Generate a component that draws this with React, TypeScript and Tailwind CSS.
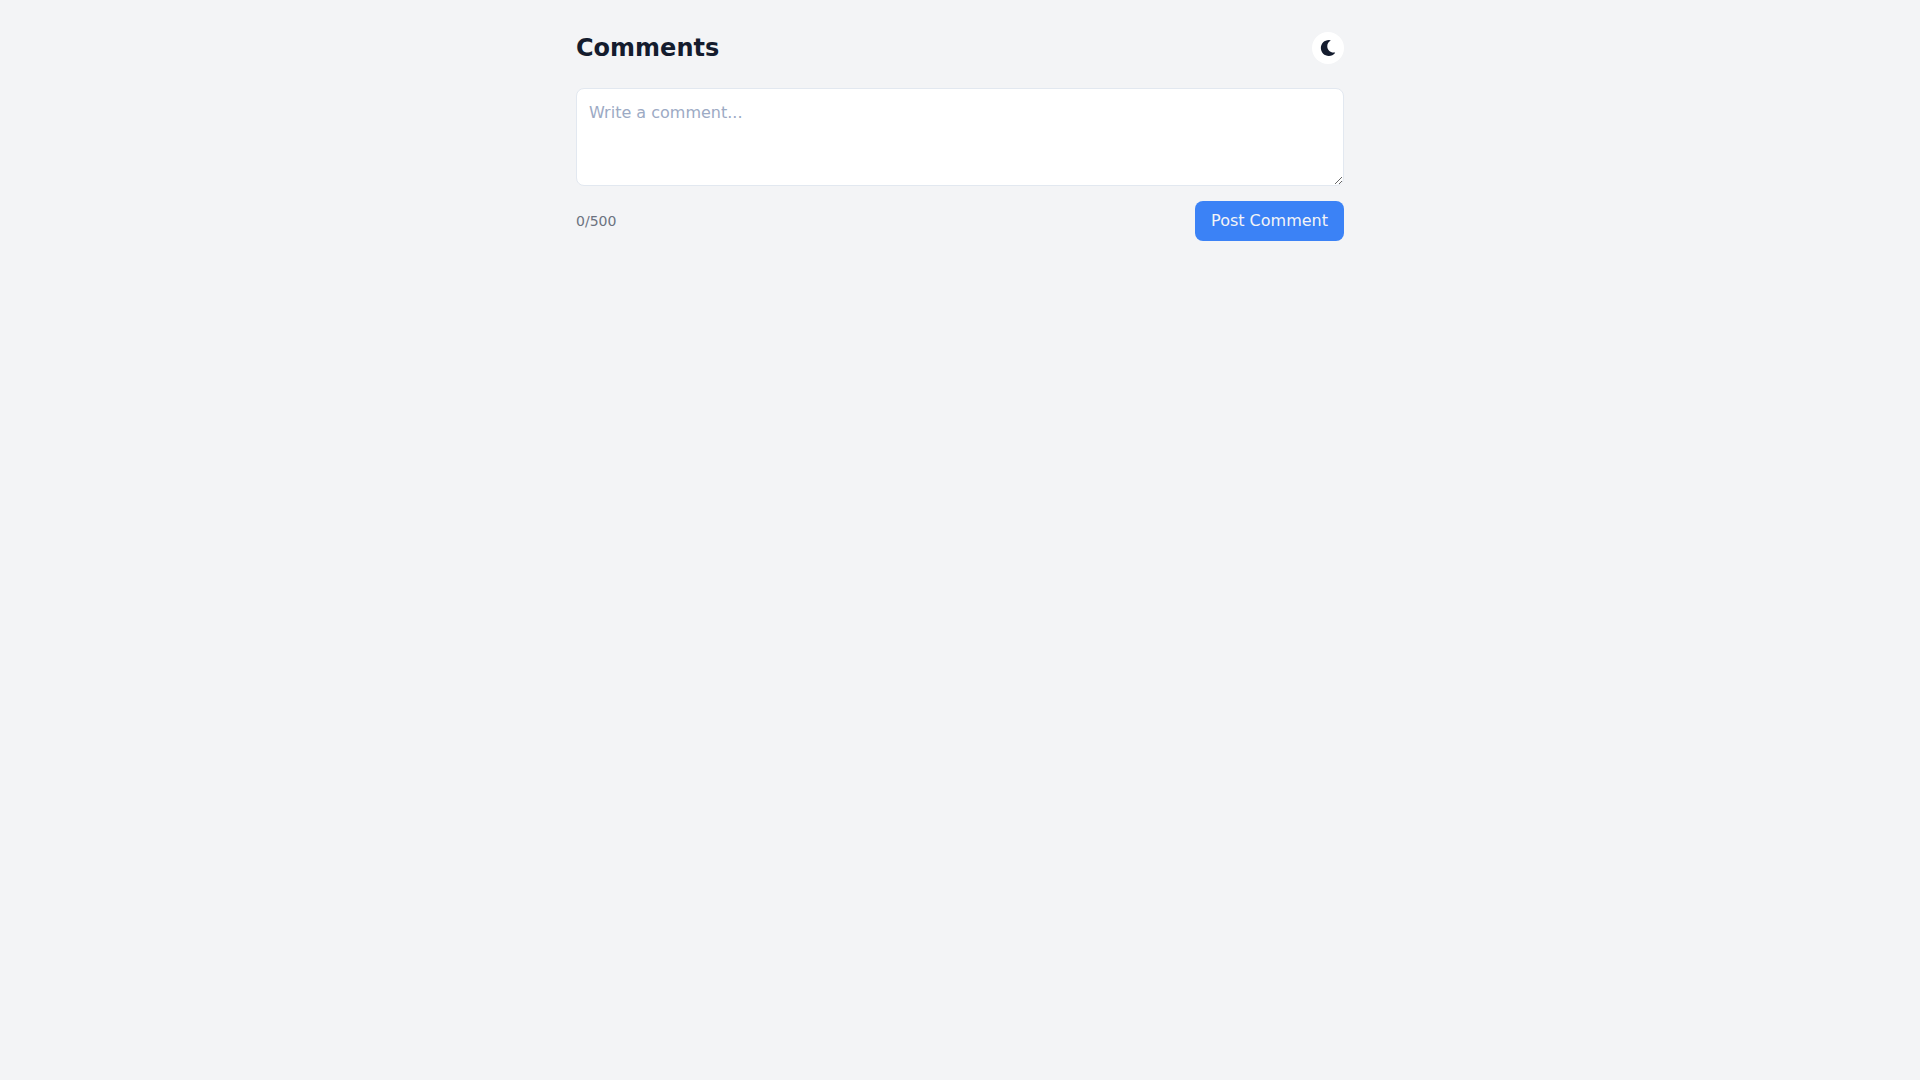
import { useState } from "react";
import { FaMoon } from "react-icons/fa";

export default function App() {
  const [text, setText] = useState("");
  return (
    <div className="min-h-screen bg-[#f3f4f6] font-['DejaVu_Sans',sans-serif] text-[#141c2e]">
      <main className="mx-auto max-w-3xl py-8">
        <header className="mb-6 flex items-center justify-between">
          <h1 className="text-2xl font-bold">Comments</h1>
          <button type="button" aria-label="Switch to dark mode" className="rounded-full bg-white p-2">
            <FaMoon className="size-4" />
          </button>
        </header>
        <form onSubmit={(e) => e.preventDefault()}>
          <textarea
            aria-label="Comment"
            rows={3}
            maxLength={500}
            value={text}
            onChange={(e) => setText(e.target.value)}
            placeholder="Write a comment..."
            className="block w-full rounded-lg border border-[#e2e8f0] bg-white p-3 placeholder:text-[#9caac4]"
          />
          <div className="mt-[15px] flex items-center justify-between">
            <span className="text-sm text-[#6b7280]">{text.length}/500</span>
            <button type="submit" className="rounded-lg bg-[#3b82f6] px-4 py-2 text-[#f3f4f6]">
              Post Comment
            </button>
          </div>
        </form>
      </main>
    </div>
  );
}
